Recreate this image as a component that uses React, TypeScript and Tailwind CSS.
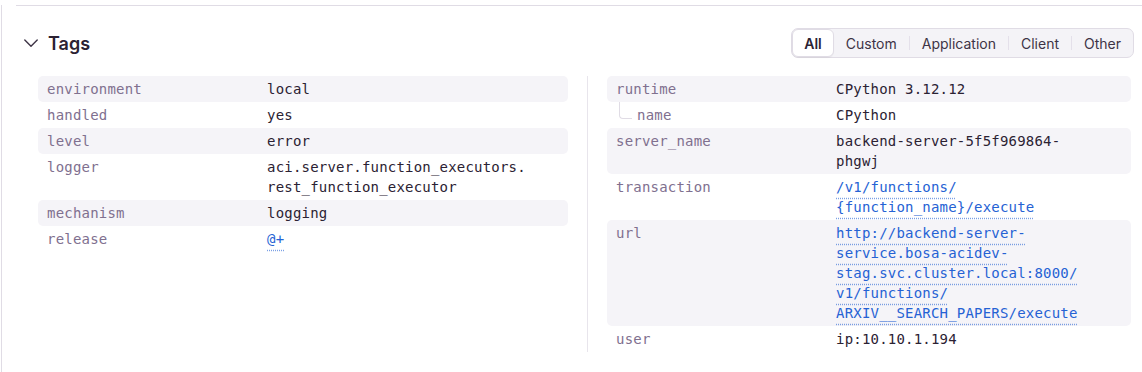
const mono = "font-['DejaVu_Sans_Mono','Liberation_Mono',monospace] text-[14px] tracking-[0.2px]";

type Row = { k: string; v: string[]; link?: boolean; child?: boolean };

const leftRows: Row[] = [
  { k: "environment", v: ["local"] },
  { k: "handled", v: ["yes"] },
  { k: "level", v: ["error"] },
  { k: "logger", v: ["aci.server.function_executors.", "rest_function_executor"] },
  { k: "mechanism", v: ["logging"] },
  { k: "release", v: ["@+"], link: true },
];

const rightRows: Row[] = [
  { k: "runtime", v: ["CPython 3.12.12"] },
  { k: "name", v: ["CPython"], child: true },
  { k: "server_name", v: ["backend-server-5f5f969864-", "phgwj"] },
  { k: "transaction", v: ["/v1/functions/", "{function_name}/execute"], link: true },
  {
    k: "url",
    v: [
      "http://backend-server-",
      "service.bosa-acidev-",
      "stag.svc.cluster.local:8000/",
      "v1/functions/",
      "ARXIV__SEARCH_PAPERS/execute",
    ],
    link: true,
  },
  { k: "user", v: ["ip:10.10.1.194"] },
];

function TagRow({ row, shaded }: { row: Row; shaded: boolean }) {
  return (
    <div
      className={`flex rounded-[5px] px-[9px] py-[3px] leading-[20px] ${mono} ${
        shaded ? "bg-[#f5f4f8]" : ""
      }`}
    >
      <div className="relative w-[220px] shrink-0 text-[#80708f]">
        {row.child && (
          <span className="absolute left-[3px] top-[-3px] h-[17px] w-[13px] rounded-bl-[4px] border-b border-l border-[#e0dce5]" />
        )}
        <span className={row.child ? "pl-[21px]" : ""}>{row.k}</span>
      </div>
      <div className="flex-1 text-[#2b2233]">
        {row.v.map((line) => (
          <div key={line}>
            {row.link ? (
              <span className="text-[#2562d4] underline decoration-dotted decoration-[#2562d4]/60 underline-offset-[6px]">
                {line}
              </span>
            ) : (
              line
            )}
          </div>
        ))}
      </div>
    </div>
  );
}

function Segmented() {
  const items = ["Custom", "Application", "Client", "Other"];
  return (
    <div className="flex h-[30px] items-center rounded-[7px] border border-[#e0dce5] bg-[#f4f3f7] text-[14px] text-[#3e3446]">
      <div className="flex h-[28px] items-center rounded-[6px] border border-[#e0dce5] bg-white px-[11px] font-semibold text-[#2b2233] shadow-[0_1px_1px_rgba(0,0,0,0.04)]">
        All
      </div>
      {items.map((it, i) => (
        <div key={it} className="flex items-center">
          {i > 0 && <span className="h-[14px] w-px bg-[#e4e0ea]" />}
          <span className="px-[12px]">{it}</span>
        </div>
      ))}
    </div>
  );
}

export default function App() {
  return (
    <div className="h-[372px] w-[1142px] overflow-hidden bg-white pl-px font-['Inter',sans-serif]">
      <div className="h-full border-l border-[#e0dce5] pl-[14px]">
        <div className="mt-[5px] border-t border-[#e0dce5]">
          {/* header */}
          <div className="mt-[22px] flex h-[30px] items-center justify-between pr-[8px]">
            <div className="flex items-center">
              <svg
                className="ml-[8px]"
                width="14"
                height="14"
                viewBox="0 0 14 14"
                fill="none"
                stroke="#3e3446"
                strokeWidth="1.4"
                strokeLinecap="round"
                strokeLinejoin="round"
              >
                <path d="M0.8 4 L7 10.2 L13.2 4" />
              </svg>
              <h2 className="ml-[10px] text-[18px] font-semibold text-[#2b2233]">Tags</h2>
            </div>
            <Segmented />
          </div>

          {/* columns */}
          <div className="ml-[22px] mt-[18px] flex items-start">
            <div className="w-[530px]">
              {leftRows.map((r, i) => (
                <TagRow key={r.k} row={r} shaded={i % 2 === 0} />
              ))}
            </div>
            <div className="ml-[19px] w-[544px] border-l border-[#e8e5ec] pl-[19px]">
              {rightRows.map((r, i) => (
                <TagRow key={r.k} row={r} shaded={i % 2 === 0} />
              ))}
            </div>
          </div>
        </div>
      </div>
    </div>
  );
}
